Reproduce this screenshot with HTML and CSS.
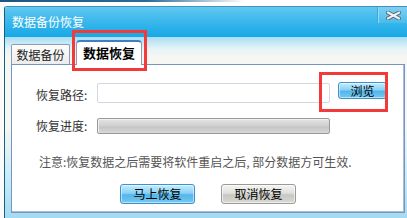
FILE: index.html
```html
<!DOCTYPE html>
<html lang="zh-CN">
<head>
<meta charset="utf-8">
<link rel="stylesheet" href="styles.css">
</head>
<body>
<div class="screen">
  <div class="topstrip"><div class="topline"></div></div>
  <div class="window">
    <div class="titlebar">
      <span class="title">数据备份恢复</span>
      <div class="close">
        <svg width="15" height="9" viewBox="0 0 15 9">
          <path d="M2 1.5 L13 7.5 M13 1.5 L2 7.5" stroke="#5c6c7a" stroke-width="4" stroke-linecap="square"/>
          <path d="M2 1.5 L13 7.5 M13 1.5 L2 7.5" stroke="#eef2f4" stroke-width="2" stroke-linecap="square"/>
        </svg>
      </div>
    </div>
    <div class="body">
      <div class="tabs">
        <div class="tab">数据备份</div>
        <div class="tab active">数据恢复</div>
      </div>
      <div class="panel">
        <div class="row row-path">
          <span class="label">恢复路径:</span>
          <div class="input"></div>
          <div class="btn btn-blue btn-browse">浏览</div>
        </div>
        <div class="row row-progress">
          <span class="label">恢复进度:</span>
          <div class="progress"></div>
        </div>
        <p class="notice">注意:恢复数据之后需要将软件重启之后, 部分数据方可生效.</p>
        <div class="actions">
          <div class="btn btn-blue btn-action">马上恢复</div>
          <div class="btn btn-gray btn-action">取消恢复</div>
        </div>
      </div>
    </div>
  </div>
  <div class="mark mark-tab"></div>
  <div class="mark mark-browse"></div>
</div>
</body>
</html>
```

FILE: styles.css
```css
* { box-sizing: border-box; }
html, body { margin: 0; padding: 0; background: #ffffff; }
body {
  font-family: "Noto Sans CJK SC", "Liberation Sans", sans-serif;
  font-size: 12px;
  color: #222;
}
.screen {
  position: relative;
  width: 407px;
  height: 218px;
  overflow: hidden;
  background: #fbfbfb;
}
.topstrip {
  height: 6px;
  background: #ffffff;
}
.topline {
  width: 245px;
  height: 2px;
  background: linear-gradient(to right, #1e5582 0%, #2b6a98 60%, rgba(60,120,170,0) 100%);
}
.window {
  margin-left: 4px;
  width: 410px;
  height: 212px;
  border-left: 1px solid #1b5f80;
  border-top: 1px solid #3f93c0;
  border-top-left-radius: 3px;
  display: flex;
  flex-direction: column;
  overflow: hidden;
}
.titlebar {
  height: 30px;
  flex: none;
  display: flex;
  align-items: flex-start;
  background: linear-gradient(#62c8f0 0%, #3cb8ec 45%, #16a8e6 100%);
}
.title {
  color: #ffffff;
  font-size: 12px;
  line-height: 16px;
  margin-left: 7px;
  margin-top: 7px;
}
.close {
  margin-left: auto;
  width: 37px;
  height: 16px;
  display: flex;
  justify-content: center;
  align-items: center;
  padding-right: 6px;
  padding-top: 1px;
  background: linear-gradient(#7fd0f2, #48bcec);
  border-left: 1px solid #3fa6d6;
  box-shadow: inset 1px 0 0 #9adaf4;
}
.body {
  flex: 1;
  padding-left: 6px;
  background: linear-gradient(#a8def4 0px, #e6f4f6 12px, #f6f6f2 20px, #f6f6f2 90px, #c8ecf8 140px, #a4daf0 100%);
}
.tabs {
  height: 27px;
  display: flex;
  align-items: flex-end;
}
.tab {
  height: 20px;
  width: 59px;
  border: 1px solid #8c9cae;
  border-bottom: none;
  border-radius: 2px 2px 0 0;
  background: linear-gradient(#fdfdfd, #ececec);
  text-align: center;
  line-height: 19px;
  font-size: 12px;
  color: #222;
}
.tab.active {
  position: relative;
  z-index: 1;
  height: 25px;
  width: 66px;
  margin-left: 6px;
  margin-bottom: -1px;
  background: #ffffff;
  border-color: #8c9cae;
  border-top: 2px solid #3f7ec4;
  border-radius: 4px 4px 0 0;
  font-weight: bold;
  font-size: 13px;
  line-height: 22px;
  color: #000;
}
.panel {
  width: 394px;
  height: 149px;
  background: #ffffff;
  border: 1px solid #7596c2;
  box-shadow: inset -1px -1px 0 #a8bedc;
  display: flex;
  flex-direction: column;
  padding-left: 24px;
}
.row {
  display: flex;
  align-items: flex-start;
}
.row-path { margin-top: 17px; }
.row-progress { margin-top: 15px; }
.label {
  width: 61px;
  flex: none;
  line-height: 16px;
  color: #333;
}
.row-path .label { margin-top: 5px; }
.input {
  width: 233px;
  height: 20px;
  margin-top: 1px;
  border: 1px solid #d2d8e2;
  border-radius: 2px;
  background: #ffffff;
}
.btn {
  text-align: center;
  color: #000;
  font-size: 12px;
}
.btn-blue {
  border: 1px solid #3a92d0;
  border-radius: 3px;
  background: linear-gradient(#c6ecfc 0%, #8ad2f6 45%, #52b6ea 55%, #78c8f0 100%);
  box-shadow: inset 0 0 0 1px rgba(255,255,255,0.5);
}
.btn-gray {
  border: 1px solid #9a9a98;
  border-radius: 3px;
  background: linear-gradient(#f4f4f2 0%, #e0e0dc 45%, #c8c8c2 55%, #d8d8d4 100%);
  box-shadow: inset 0 0 0 1px rgba(255,255,255,0.6);
}
.btn-browse {
  width: 49px;
  height: 17px;
  margin-left: 8px;
  line-height: 15px;
}
.progress {
  width: 233px;
  height: 16px;
  border: 1px solid #9a9a9a;
  border-radius: 2px;
  background: linear-gradient(#e4e4e4 0%, #cfcfcf 50%, #c6c6c6 60%, #d8d8d8 100%);
  box-shadow: inset 1px 1px 0 #f0f0f0;
}
.notice {
  margin: 20px 0 0 3px;
  line-height: 16px;
  color: #555;
  white-space: nowrap;
}
.actions {
  margin-top: 14px;
  margin-left: -24px;
  display: flex;
  justify-content: center;
  gap: 26px;
}
.btn-action {
  width: 75px;
  height: 20px;
  line-height: 18px;
  font-size: 12px;
}
.mark {
  position: absolute;
  border: 3px solid #f23a3a;
}
.mark-tab {
  left: 72px;
  top: 30px;
  width: 75px;
  height: 41px;
}
.mark-browse {
  left: 319px;
  top: 72px;
  width: 69px;
  height: 40px;
}
```
